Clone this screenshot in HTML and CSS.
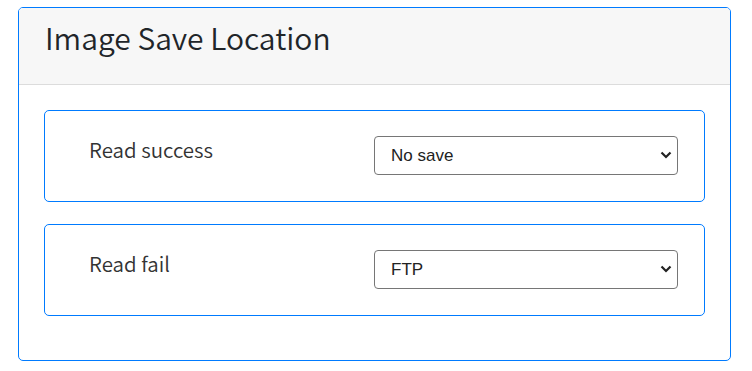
FILE: index.html
```
<!DOCTYPE html>
<html lang="en">
<head>
<meta charset="UTF-8">
<meta name="viewport" content="width=device-width, initial-scale=1.0">
<title>Image Save Location</title>
<link rel="stylesheet" href="styles.css">
</head>
<body>

<div class="panel">
    <div class="panel-header">
        <h3>Image Save Location</h3>
    </div>
    <div class="panel-body">
        <div class="setting-card">
            <label for="read-success">Read success</label>
            <div class="select-wrap">
                <select id="read-success">
                    <option>No save</option>
                    <option>FTP</option>
                    <option>SD card</option>
                </select>
                <svg class="chevron" width="12" height="8" viewBox="0 0 12 8"><path d="M1.5 1.5 L6 6 L10.5 1.5" fill="none" stroke="#222" stroke-width="2.2"/></svg>
            </div>
        </div>
        <div class="setting-card">
            <label for="read-fail">Read fail</label>
            <div class="select-wrap">
                <select id="read-fail">
                    <option>No save</option>
                    <option selected>FTP</option>
                    <option>SD card</option>
                </select>
                <svg class="chevron" width="12" height="8" viewBox="0 0 12 8"><path d="M1.5 1.5 L6 6 L10.5 1.5" fill="none" stroke="#222" stroke-width="2.2"/></svg>
            </div>
        </div>
    </div>
</div>

</body>
</html>
```
FILE: styles.css
```
body {
    margin: 7px 21px 0 18px;
    font-family: "Noto Sans CJK JP", "Noto Sans", sans-serif;
    background-color: #fff;
    color: #212529;
}
.panel {
    border: 1px solid #007bff;
    border-radius: 5px;
    overflow: hidden;
}
.panel-header {
    background-color: #f7f7f7;
    border-bottom: 1px solid #dcdcdc;
    padding: 11px 26px 29px;
}
.panel-header h3 {
    margin: 0;
    font-size: 30px;
    font-weight: 350;
    line-height: 36px;
}
.panel-body {
    padding: 25px 25px 44px;
}
.setting-card {
    display: grid;
    grid-template-columns: 1fr 304px;
    align-items: start;
    height: 92px;
    box-sizing: border-box;
    padding: 25px 26px 26px 44px;
    border: 1px solid #007bff;
    border-radius: 5px;
}
.setting-card + .setting-card {
    margin-top: 22px;
}
.setting-card label {
    font-size: 20.5px;
    font-weight: 350;
    line-height: 26px;
    color: #333;
}
.select-wrap {
    position: relative;
}
.select-wrap select {
    display: block;
    width: 100%;
    height: 39px;
    padding: 0 30px 0 16px;
    font-family: "Liberation Sans", Arial, sans-serif;
    font-size: 17px;
    color: #222;
    background-color: #fff;
    border: 1px solid #767676;
    border-radius: 4px;
    -webkit-appearance: none;
    appearance: none;
}
.chevron {
    position: absolute;
    right: 6px;
    top: 15px;
    pointer-events: none;
}
```
